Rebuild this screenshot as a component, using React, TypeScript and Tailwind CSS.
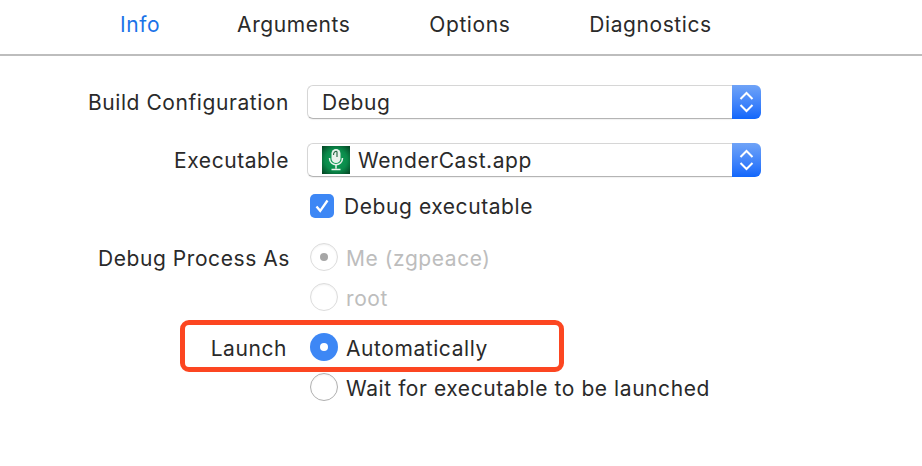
const FONT = "font-['Inter','Liberation_Sans',sans-serif]";

function Stepper() {
  return (
    <div className="flex h-[34px] w-[29px] shrink-0 items-center justify-center rounded-r-[6px] bg-gradient-to-b from-[#6fa3f7] to-[#0f66fb]">
      <svg width="15" height="22" viewBox="0 0 15 22" fill="none" stroke="white" strokeWidth="2">
        <path d="M1.5 8 7.5 2l6 6" />
        <path d="M1.5 14l6 6 6-6" />
      </svg>
    </div>
  );
}

function Select({ children }: { children: React.ReactNode }) {
  return (
    <div className="flex h-[34px] w-[454px] items-stretch">
      <div className="flex min-w-0 flex-1 items-center rounded-l-[6px] border border-r-0 border-[#d6d6d6] border-b-[#b4b4b4] bg-white pl-[15px] shadow-[0_1px_1px_rgba(0,0,0,0.06)]">
        {children}
      </div>
      <Stepper />
    </div>
  );
}

function Radio({ state }: { state: 'on' | 'off' | 'dim-on' | 'dim-off' }) {
  if (state === 'on') {
    return (
      <div className="flex h-[28px] w-[28px] items-center justify-center rounded-full bg-[#3d87f5]">
        <div className="h-[8px] w-[8px] rounded-full bg-white" />
      </div>
    );
  }
  const dim = state.startsWith('dim');
  return (
    <div className={`flex h-[28px] w-[28px] items-center justify-center rounded-full border bg-white ${dim ? 'border-[#dcdcdc]' : 'border-[#b0b0b0]'} shadow-[inset_0_1px_2px_rgba(0,0,0,0.06)]`}>
      {state === 'dim-on' && <div className="h-[8px] w-[8px] rounded-full bg-[#a6a6a6]" />}
    </div>
  );
}

function RadioRow({ label, state, left, labelRight = 288 }: { label: string; state: 'on' | 'off' | 'dim-on' | 'dim-off'; left?: string; labelRight?: number }) {
  const dim = state.startsWith('dim');
  return (
    <div className="flex h-[28px] items-center">
      <div className="w-[310px] pt-[4px] text-right text-[#2a2a2a]" style={{ paddingRight: 310 - labelRight }}>{left}</div>
      <Radio state={state} />
      <span className={`ml-[8px] pt-[4px] ${dim ? 'text-[#bdbdbd]' : 'text-[#2a2a2a]'}`}>{label}</span>
    </div>
  );
}

export default function App() {
  return (
    <div className={`relative h-[466px] w-[922px] overflow-hidden bg-white text-[21px] tracking-[0.57px] text-[#2a2a2a] ${FONT}`}>
      <div className="flex h-[56px] items-center border-b-2 border-[#bdbdbd] pb-[5px] pl-[120px]">
        <span className="text-[#1a73e8]">Info</span>
        <span className="ml-[77px]">Arguments</span>
        <span className="ml-[79px]">Options</span>
        <span className="ml-[79px]">Diagnostics</span>
      </div>

      <div className="flex flex-col pt-[29px]">
        <div className="flex items-center gap-[18px]">
          <div className="w-[289px] pt-[2px] text-right">Build Configuration</div>
          <Select><span className="-ml-[1px] pt-[2px]">Debug</span></Select>
        </div>

        <div className="mt-[24px] flex items-center gap-[18px]">
          <div className="w-[289px] pt-[2px] text-right">Executable</div>
          <Select>
            <svg width="28" height="28" viewBox="0 0 28 28" className="mr-[8px] -ml-[1px] shrink-0">
              <defs>
                <radialGradient id="g" cx="50%" cy="50%" r="72%">
                  <stop offset="0%" stopColor="#0fa45a" />
                  <stop offset="55%" stopColor="#0a8a4a" />
                  <stop offset="100%" stopColor="#033d20" />
                </radialGradient>
              </defs>
              <rect width="28" height="28" fill="url(#g)" />
              <rect x="9.5" y="3" width="9" height="14" rx="4.5" fill="#e9f2ec" />
              <path d="M7.5 12c0 9 13 9 13 0" fill="none" stroke="#e9f2ec" strokeWidth="1.5" />
              <path d="M14 19v3.5M9.5 23.5h9" stroke="#e9f2ec" strokeWidth="1.5" fill="none" />
              <path d="M11.5 9c0-3 2-4.200 3.500-3.500M15 5.500v5.500" fill="none" stroke="#2c6a48" strokeWidth="1.2" />
            </svg>
            <span className="pt-[2px]">WenderCast.app</span>
          </Select>
        </div>

        <div className="mt-[17px] flex h-[24px] items-center pl-[310px]">
          <div className="flex h-[24px] w-[24px] items-center justify-center rounded-[5px] bg-[#3d87f5]">
            <svg width="16" height="16" viewBox="0 0 16 16" fill="none" stroke="white" strokeWidth="2.3">
              <path d="M2.500 8.500l3.700 4.300L13.500 2.500" />
            </svg>
          </div>
          <span className="ml-[10px] pt-[2px]">Debug executable</span>
        </div>

        <div className="mt-[25px] flex flex-col gap-[12px]">
          <RadioRow left="Debug Process As" label="Me (zgpeace)" state="dim-on" labelRight={290} />
          <RadioRow label="root" state="dim-off" />
        </div>

        <div className="mt-[22px] flex flex-col gap-[12px]">
          <RadioRow left="Launch" label="Automatically" state="on" labelRight={287} />
          <RadioRow label="Wait for executable to be launched" state="off" />
        </div>
      </div>

      {/* red annotation box */}
      <div className="absolute top-[320px] left-[180px] h-[52px] w-[384px] rounded-[9px] border-[5px] border-[#fc4621]" />
    </div>
  );
}
